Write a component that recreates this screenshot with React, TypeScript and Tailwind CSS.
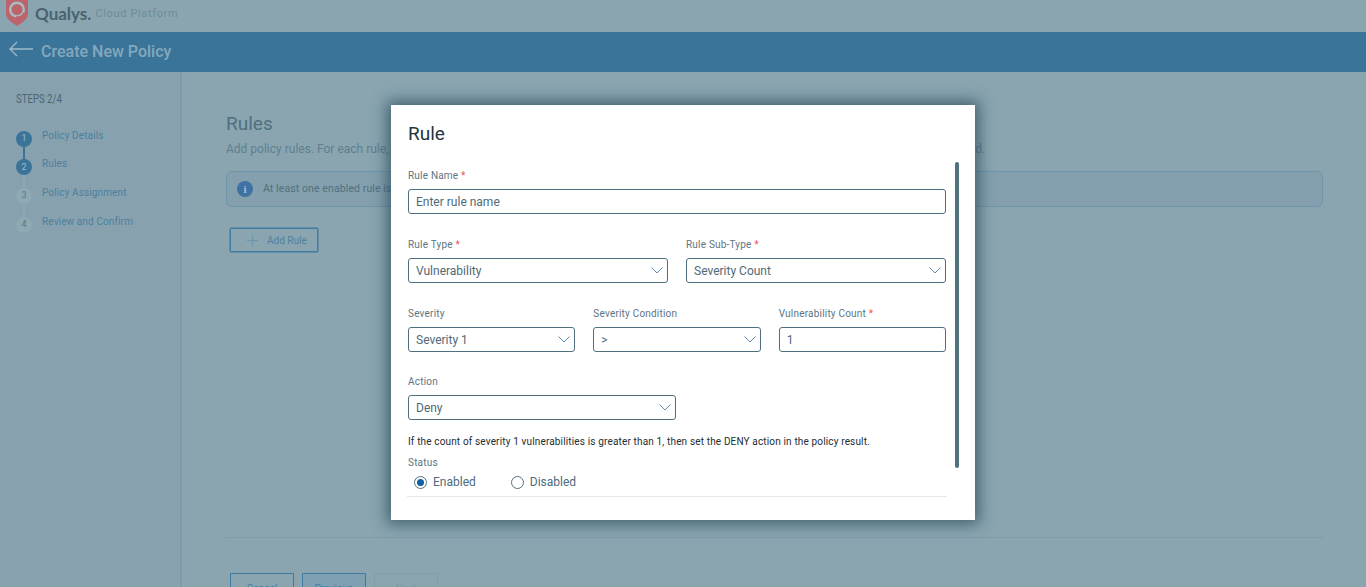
import React from 'react';

const steps = [
  { n: 1, label: 'Policy Details', active: true },
  { n: 2, label: 'Rules', active: true },
  { n: 3, label: 'Policy Assignment', active: false },
  { n: 4, label: 'Review and Confirm', active: false },
];

const Chevron = () => (
  <svg width="12" height="7" viewBox="0 0 12 7" fill="none" className="shrink-0">
    <path d="M0.500 0.500L6 6l5.500-5.500" stroke="#5f8db5" strokeWidth="1" />
  </svg>
);

const Label = ({ text, required }: { text: string; required?: boolean }) => (
  <div className="text-[10px] leading-[12px] tracking-[0.2px] text-[#5d7582] mb-[7px]">
    {text}
    {required && <span className="text-[#f0525c]"> *</span>}
  </div>
);

const Select = ({ value }: { value: string }) => (
  <div className="h-[25px] flex items-center justify-between pl-[7px] pr-[4px] border border-[#4f6f7f] rounded-[3px] text-[12px] text-[#4f6a78]">
    <span>{value}</span>
    <Chevron />
  </div>
);

const TextBox = ({ value }: { value: string }) => (
  <div className="h-[25px] flex items-center pl-[7px] border border-[#4f6f7f] rounded-[3px] text-[12px] text-[#4f6a78]">
    {value}
  </div>
);

const Radio = ({ label, checked }: { label: string; checked?: boolean }) => (
  <div className="flex items-center gap-[6px] text-[12px] text-[#4f6a78]">
    <span className="w-[13px] h-[13px] rounded-full border border-[#54707e] flex items-center justify-center">
      {checked && <span className="w-[7px] h-[7px] rounded-full bg-[#0f5fa6]" />}
    </span>
    {label}
  </div>
);

export default function App() {
  return (
    <div className="relative h-[587px] overflow-hidden flex flex-col bg-[#8aa5b0] font-['Roboto',sans-serif]">
      <div className="h-8 shrink-0 flex items-center pl-[6px] pb-[6px]">
        <svg width="22" height="26" viewBox="0 0 22 26" fill="none" className="-mt-[1px]">
          <path d="M0 0h22v13c0 6-5 9-11 13C5 22 0 19 0 13z" fill="#bb646c" />
          <circle cx="11" cy="9.500" r="6.800" stroke="#a9bcc2" strokeWidth="2.400" />
          <path d="M10 17.500c4 .5 7-1.500 8.500-4.500" stroke="#bb646c" strokeWidth="2.600" />
        </svg>
        <span className="ml-[7px] text-[17px] font-bold leading-none text-[#48636f] font-['Lato',sans-serif]">Qualys.</span>
        <span className="ml-[4px] mt-[2px] text-[11px] tracking-[0.65px] text-[#6f8b97]">Cloud Platform</span>
      </div>

      <div className="h-10 shrink-0 flex items-center bg-[#3b7499] pl-[9px]">
        <svg width="25" height="16" viewBox="0 0 25 16" fill="none" className="-mt-[6px]">
          <path d="M24 8H1M8 1L1 8l7 7" stroke="#9fb9c6" strokeWidth="1.300" />
        </svg>
        <span className="ml-[7px] text-[16px] font-medium text-[#84a8bd]">Create New Policy</span>
      </div>

      <div className="flex-1 flex min-h-0">
        <aside className="w-[182px] shrink-0 bg-[#87a2ae] border-r-2 border-[#7e9aa6] pl-4 pt-[20px]">
          <div className="text-[13px] leading-[14px] text-[#4b6673] scale-x-[0.74] origin-left">STEPS 2/4</div>
          <div className="mt-[21.600px] flex flex-col">
            {steps.map((s, i) => (
              <div key={s.n} className="flex h-[28.700px]">
                <div className="relative w-4 shrink-0 mt-[3px]">
                  {i < 3 && (
                    <div className={`absolute left-[7px] top-[14px] w-[2px] h-[18px] ${s.active && i === 0 ? 'bg-[#3b7499]' : 'bg-[#8ea9b4]'}`} />
                  )}
                  <div className={`relative w-4 h-4 rounded-full flex items-center justify-center text-[9px] ${s.active ? 'bg-[#3b7499] text-[#9dbacb]' : 'bg-[#8ea9b4] text-[#5d7582]'}`}>
                    {s.n}
                  </div>
                </div>
                <div className="ml-[10px] mt-px text-[10px] leading-[14px] tracking-[0.12px] text-[#4c7f9f]">{s.label}</div>
              </div>
            ))}
          </div>
        </aside>

        <main className="flex-1 min-w-0 pl-[44px] pr-[43px] pt-[41px]">
          <div className="text-[19px] leading-[22px] text-[#4f7080]">Rules</div>
          <div className="mt-[6px] text-[12px] leading-[16px] whitespace-nowrap text-[#5e808f]">
            Add policy rules. For each rule, specify the rule type, the conditions to check and the action to take in the policy result when the rule is matched.
          </div>
          <div className="mt-[14px] h-[36px] flex items-center pl-[10px] rounded-[6px] border border-[#6d96ad] bg-[#84a0ae]">
            <span className="w-4 h-4 rounded-full bg-[#3f71a3] flex items-center justify-center text-[11px] font-bold text-[#a9c0cc] font-['Liberation_Serif',serif]">i</span>
            <span className="ml-[10px] text-[10.500px] tracking-[0.1px] text-[#4f7080]">At least one enabled rule is required to create a policy.</span>
          </div>
          <div className="mt-[21px] ml-1 w-[88px] h-6 flex items-center pl-[15px] border border-[#3f7ba0] rounded-[1px] shadow-[0_0_0_0.5px_#3f7ba0]">
            <svg width="13" height="13" viewBox="0 0 13 13" fill="none">
              <path d="M6.500 1v11M1 6.500h11" stroke="#6d96ad" strokeWidth="1.200" />
            </svg>
            <span className="ml-[8px] text-[10px] text-[#4f7f9f]">Add Rule</span>
          </div>
          <div className="mt-[285px] h-px bg-[#7f9ca9]" />
          <div className="mt-[35px] ml-1 flex gap-2">
            <div className="w-16 h-8 pt-[7px] text-center text-[10px] text-[#3f7ba0] border border-[#3f7ba0] rounded-[1px]">Cancel</div>
            <div className="w-16 h-8 pt-[7px] text-center text-[10px] text-[#3f7ba0] border border-[#3f7ba0] bg-[#7fa0b2] rounded-[1px]">Previous</div>
            <div className="w-16 h-8 pt-[7px] text-center text-[10px] text-[#7c98a5] border border-[#819da9] rounded-[1px]">Next</div>
          </div>
        </main>
      </div>

      {/* dialog */}
      <div className="absolute inset-0 flex justify-center items-start pt-[105px]">
        <div className="relative w-[584px] h-[415px] bg-white pl-[17px] pr-[29px] pt-[17px] shadow-[0_0_14px_4px_rgba(40,75,90,0.75)]">
          <div className="text-[19px] leading-[24px] text-[#1f3642]">Rule</div>
          <div className="absolute right-[16px] top-[57px] w-1 h-[306px] rounded-[2px] bg-[#50727f]" />

          <div className="mt-[24px]">
            <Label text="Rule Name" required />
            <TextBox value="Enter rule name" />
          </div>

          <div className="mt-[25px] grid grid-cols-2 gap-[18px]">
            <div>
              <Label text="Rule Type" required />
              <Select value="Vulnerability" />
            </div>
            <div>
              <Label text="Rule Sub-Type" required />
              <Select value="Severity Count" />
            </div>
          </div>

          <div className="mt-[25px] grid grid-cols-3 gap-[18px]">
            <div>
              <Label text="Severity" />
              <Select value="Severity 1" />
            </div>
            <div>
              <Label text="Severity Condition" />
              <Select value=">" />
            </div>
            <div>
              <Label text="Vulnerability Count" required />
              <TextBox value="1" />
            </div>
          </div>

          <div className="mt-[24px] w-[268px]">
            <Label text="Action" />
            <Select value="Deny" />
          </div>

          <div className="mt-[14px] text-[10px] leading-[16px] tracking-[0.15px] text-[#222d33]">
            If the count of severity 1 vulnerabilities is greater than 1, then set the DENY action in the policy result.
          </div>
          <div className="mt-[7px] text-[10px] leading-[12px] tracking-[0.2px] text-[#5d7582]">Status</div>
          <div className="mt-[4px] pl-[6px] flex gap-[35px]">
            <Radio label="Enabled" checked />
            <Radio label="Disabled" />
          </div>
          <div className="mt-[5px] -mx-px h-px bg-[#e3e8ee]" />
        </div>
      </div>
    </div>
  );
}
